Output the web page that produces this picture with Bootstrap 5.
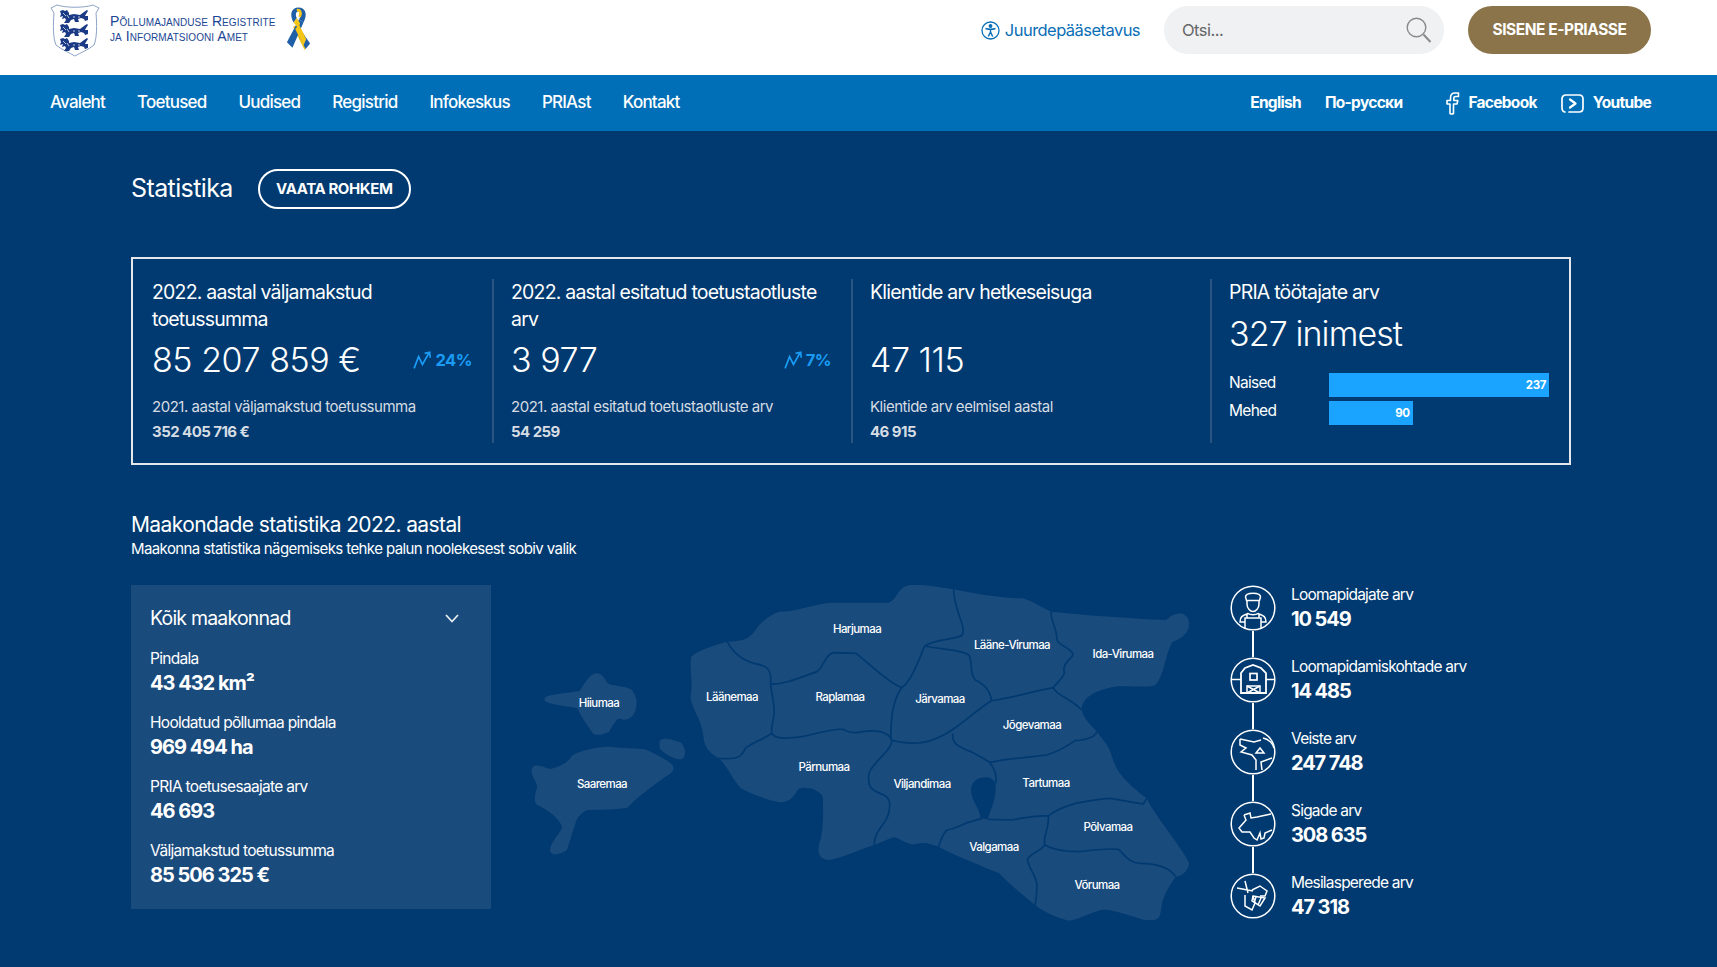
<!DOCTYPE html>
<html lang="et">
<head>
<meta charset="UTF-8">
<meta name="viewport" content="width=device-width, initial-scale=1.0">
<title>PRIA statistika</title>
<link href="https://cdn.jsdelivr.net/npm/bootstrap@5.3.0/dist/css/bootstrap.min.css" rel="stylesheet">
<style>
body {
    background: #003a70;
    color: #fff;
    font-family: Inter, "Noto Sans", sans-serif;
    min-height: 100vh;
}
.top-bar { height: 75px; background: #fff; padding: 0 66px 15px 50px; }
.logo-text {
    font-family: "Liberation Sans", sans-serif;
    font-variant: small-caps;
    font-size: 14px;
    line-height: 15px;
    color: #1c4693;
    letter-spacing: .06px;
    margin-left: 10px;
    margin-top: -3px;
}
.ribbon-ico { margin-left: 11px; margin-top: -4px; }
.access-link { color: #0b6fb6; font-size: 16.5px; letter-spacing: -.55px; text-decoration: none; gap: 5px; }
.search-box {
    width: 280px; height: 48px; border-radius: 24px; background: #f0f1f3;
    margin: 0 24px; padding: 0 12px 0 16px;
}
.search-box input {
    background: transparent; border: 0; outline: 0; width: 100%;
    font-size: 16.5px; letter-spacing: -.5px; color: #555;
}
.search-box input::placeholder { color: #666; }
.enter-btn {
    width: 183px; height: 48px; border-radius: 24px; background: #8b734a; color: #fff;
    font-weight: 700; font-size: 15.5px; letter-spacing: -.45px; border: 0; padding: 0;
}
.main-nav { height: 56px; background: #016fb7; padding: 0 66px 0 50px; }
.main-nav a { color: #fff; text-decoration: none; }
.nav-left { gap: 32px; font-size: 17px; font-weight: 500; letter-spacing: -.78px; }
.nav-right { font-size: 15.5px; font-weight: 700; letter-spacing: -.7px; }
.ru-link { margin-right: 43px; }
.yt-ico { margin-right: 9px; }
.content-wrap { padding: 38px 146px 0 131px; }
.page-title { font-size: 25px; font-weight: 400; letter-spacing: -.6px; margin: 0 25px 0 0; line-height: 38px; padding-bottom: 2px; }
.more-btn {
    height: 40px; width: 153px; border: 2px solid #fff; border-radius: 20px; background: transparent; color: #fff;
    font-weight: 700; font-size: 15px; letter-spacing: -.4px; padding: 0;
}
.stat-box { border: 2px solid #e4e7ea; padding: 20px 0; margin-top: 48px; height: 208px; }
.stat-col { padding: 0 20px 0 19px; height: 164px; }
.stat-col + .stat-col { border-left: 2px solid #2a5583; padding-left: 17px; }
.stat-title { font-size: 19.5px; line-height: 27px; letter-spacing: -.8px; height: 54px; }
.stat-title-one { height: 27px; }
.stat-num { font-size: 34px; line-height: 54px; letter-spacing: -.45px; font-weight: 300; }
.stat-num-tight { letter-spacing: -.9px; margin-top: 1px; }
.stat-trend { color: #1a9cf5; font-weight: 700; font-size: 16.5px; letter-spacing: -.5px; gap: 2px; }
.stat-sub { font-size: 15px; line-height: 22px; letter-spacing: -.48px; color: #d6dce3; margin-top: 9px; }
.stat-subval { font-size: 15px; line-height: 22px; letter-spacing: -.55px; color: #d6dce3; font-weight: 700; margin-top: 3px; }
.bar-list { margin-top: 12px; gap: 4px; }
.bar-label { width: 100px; font-size: 15.5px; line-height: 20px; letter-spacing: -.7px; font-weight: 400; padding-bottom: 4px; }
.bar-track { flex: 1; height: 24px; }
.bar-fill {
    height: 24px; background: #1aa3ff; color: #fff; font-weight: 700; font-size: 11.5px; letter-spacing: -.4px;
    line-height: 24px; text-align: right; padding-right: 3px;
}
.county-title { font-size: 21px; line-height: 30px; margin: 45px 0 0; font-weight: 400; letter-spacing: -.6px; }
.county-hint { font-size: 15px; line-height: 22px; letter-spacing: -.6px; margin: -2px 0 25px; }
.county-panel { width: 360px; height: 324px; background: #1a4b7d; padding: 18px 32px 0 19px; flex: none; }
.select-line { font-size: 19.5px; line-height: 30px; letter-spacing: -.8px; margin-bottom: 15px; }
.panel-item { margin-bottom: 16px; }
.panel-label { font-size: 15.5px; line-height: 22px; letter-spacing: -.7px; }
.panel-value { font-size: 20px; line-height: 27px; margin-bottom: -1px; font-weight: 700; letter-spacing: -1px; }
.map-holder { margin-left: 29px; flex: none; }
.map-name {
    fill: #fff; font-size: 11.5px; font-weight: 500; letter-spacing: -.58px;
    text-anchor: middle; dominant-baseline: middle; transform: translateY(1.5px);
}
.map-line { vector-effect: non-scaling-stroke; }
.count-list { margin-left: 30px; }
.count-row { height: 72px; gap: 15px; }
.count-ico { width: 46px; flex: none; }
.count-line { width: 2px; height: 26px; background: #fff; }
.count-label { font-size: 15.5px; line-height: 20px; letter-spacing: -.78px; }
.count-value { font-size: 20px; line-height: 28px; font-weight: 700; letter-spacing: -1.1px; }
</style>
</head>
<body>

<header class="top-bar d-flex align-items-center">
    <svg width="50" height="54" viewBox="0 0 50 54">
        <path d="M1 5 L7 2 C16 5 34 5 43 2 L49 5 L46 10 C47 22 47 35 44 42 C38 47 30 50 25 53 C20 50 12 47 6 42 C3 35 3 22 4 10 Z" fill="#fff" stroke="#8ea3c6" stroke-width="1"/>
        <defs>
            <g id="leo">
                <path fill="#1b3a86" d="M0 1 L3 0 L5 1 L7 0 L9 3 L9 5 L14 4 L20 5 L24 2 L27 0 L28 1 L26 4 L25 6 L28 6 L28 10 L25 11 L24 9 L21 8 L18 9 L19 12 L15 12 L14 9 L11 10 L9 13 L4 13 L6 10 L5 8 L2 9 L3 6 L0 7 L1 4 Z"/>
                <path fill="none" stroke="#fff" stroke-width=".7" d="M3 3 L6 6 M7 5 L9 8 M14 6 V8 M19 6 V8"/>
            </g>
        </defs>
        <use href="#leo" x="10" y="7"/>
        <use href="#leo" x="10" y="21"/>
        <use href="#leo" x="10" y="35"/>
    </svg>
    <div class="logo-text">Põllumajanduse Registrite<br>ja Informatsiooni Amet</div>
    <svg class="ribbon-ico" width="25" height="43" viewBox="2 1 21 39">
        <path d="M12.5 17 L22 34 L18 40 L7.5 19" fill="#f5c518"/>
        <path d="M8 15 C4 8 6 1.5 12.5 1.5 C19 1.5 21 8 17 15 L13 12 C15.5 8 15 5 12.5 5 C10 5 9.5 8 11 11 Z" fill="#1f5fa8"/>
        <path d="M17 15 L7 38 L2 33 L13 12 Z" fill="#1f5fa8"/>
        <path d="M8 15 L11 11 L14 16 L12 20 Z" fill="#f5c518"/>
        <path d="M11 4 C14 3.5 15.5 6 13.5 10" stroke="#f5c518" stroke-width="2.5" fill="none"/>
        <path d="M16 24 L23 34 L19 39 L12.5 27 Z" fill="#1f5fa8"/>
        <path d="M13 17 L19.5 30 L17 36 L9.5 21 Z" fill="#f5c518"/>
    </svg>

    <a class="access-link d-flex align-items-center ms-auto" href="#">
        <svg width="19" height="19" viewBox="0 0 19 19" fill="none" stroke="#0b6fb6" stroke-width="1.3">
            <circle cx="9.5" cy="9.5" r="8.5"/>
            <circle cx="9.5" cy="5" r="1.3" fill="#0b6fb6"/>
            <path d="M4.5 7.5 C7 8.3 12 8.3 14.5 7.5 M9.5 8 V11.5 M9.5 11 L7.3 15.5 M9.5 11 L11.7 15.5" stroke-width="1.5"/>
        </svg>
        Juurdepääsetavus
    </a>
    <div class="search-box d-flex align-items-center">
        <input type="text" placeholder="Otsi...">
        <svg class="flex-shrink-0" width="26" height="26" viewBox="0 0 26 26" fill="none" stroke="#8a8a8a">
            <circle cx="10.5" cy="10.5" r="9.3" stroke-width="1.4"/>
            <path d="M17.5 17.5 L24.5 25" stroke-width="2"/>
        </svg>
    </div>
    <button class="enter-btn">SISENE E-PRIASSE</button>
</header>

<nav class="main-nav d-flex align-items-center justify-content-between">
    <div class="nav-left d-flex">
        <a href="#">Avaleht</a>
        <a href="#">Toetused</a>
        <a href="#">Uudised</a>
        <a href="#">Registrid</a>
        <a href="#">Infokeskus</a>
        <a href="#">PRIAst</a>
        <a href="#">Kontakt</a>
    </div>
    <div class="nav-right d-flex align-items-center">
        <a href="#" class="me-4">English</a>
        <a href="#" class="ru-link">По-русски</a>
        <a href="#" class="d-flex align-items-center me-4">
            <svg class="me-2" width="15" height="23" viewBox="0 0 15 23" fill="none" stroke="#fff" stroke-width="1.6" stroke-linejoin="round">
                <path d="M13.5 1 H10 C7 1 5.5 3 5.5 6 V8.5 H2 V12 H5 V21.5 C6 22 7.5 22 8.5 21.5 V12 H12 L12.8 8.5 H8.8 V6.5 C8.8 5 9.5 4.5 10.5 4.5 H13.5 Z"/>
            </svg>
            Facebook
        </a>
        <a href="#" class="d-flex align-items-center">
            <svg class="yt-ico" width="23" height="19" viewBox="0 0 23 19" fill="none" stroke="#fff" stroke-width="1.7" stroke-linecap="round" stroke-linejoin="round">
                <path d="M5 1 H18 C20.5 1 22 2.5 22 5 V14 C22 16.5 20.5 18 18 18 H8 M4 18 C2.5 18 1 16.5 1 14 V5 C1 2.5 2.5 1 5 1"/>
                <path d="M9 5.5 L14.5 9.5 L9 13.5" stroke-width="2.2"/>
            </svg>
            Youtube
        </a>
    </div>
</nav>

<main class="content-wrap">
    <div class="d-flex align-items-center">
        <h1 class="page-title">Statistika</h1>
        <button class="more-btn">VAATA ROHKEM</button>
    </div>

    <section class="stat-box row g-0">
        <div class="col-3 stat-col">
            <div class="stat-title">2022. aastal väljamakstud toetussumma</div>
            <div class="d-flex justify-content-between align-items-center">
                <div class="stat-num">85 207 859 €</div>
                <div class="stat-trend d-flex align-items-center">
                    <svg width="20" height="18" viewBox="0 0 18 16" fill="none" stroke="#1a9cf5" stroke-width="1.5"><path d="M1 15.5 L5 5 L8.5 12 L14.5 1.5 M10.5 2 L15 1 L15.5 6"/></svg>
                    24%
                </div>
            </div>
            <div class="stat-sub">2021. aastal väljamakstud toetussumma</div>
            <div class="stat-subval">352 405 716 €</div>
        </div>
        <div class="col-3 stat-col">
            <div class="stat-title">2022. aastal esitatud toetustaotluste arv</div>
            <div class="d-flex justify-content-between align-items-center">
                <div class="stat-num">3 977</div>
                <div class="stat-trend d-flex align-items-center">
                    <svg width="20" height="18" viewBox="0 0 18 16" fill="none" stroke="#1a9cf5" stroke-width="1.5"><path d="M1 15.5 L5 5 L8.5 12 L14.5 1.5 M10.5 2 L15 1 L15.5 6"/></svg>
                    7%
                </div>
            </div>
            <div class="stat-sub">2021. aastal esitatud toetustaotluste arv</div>
            <div class="stat-subval">54 259</div>
        </div>
        <div class="col-3 stat-col">
            <div class="stat-title">Klientide arv hetkeseisuga</div>
            <div class="stat-num">47 115</div>
            <div class="stat-sub">Klientide arv eelmisel aastal</div>
            <div class="stat-subval">46 915</div>
        </div>
        <div class="col-3 stat-col">
            <div class="stat-title stat-title-one">PRIA töötajate arv</div>
            <div class="stat-num stat-num-tight">327 inimest</div>
            <div class="bar-list d-flex flex-column">
                <div class="d-flex align-items-center">
                    <div class="bar-label">Naised</div>
                    <div class="bar-track"><div class="bar-fill" style="width:100%">237</div></div>
                </div>
                <div class="d-flex align-items-center">
                    <div class="bar-label">Mehed</div>
                    <div class="bar-track"><div class="bar-fill" style="width:38%">90</div></div>
                </div>
            </div>
        </div>
    </section>

    <h2 class="county-title">Maakondade statistika 2022. aastal</h2>
    <p class="county-hint">Maakonna statistika nägemiseks tehke palun noolekesest sobiv valik</p>

    <div class="d-flex align-items-start">
        <div class="county-panel">
            <div class="select-line d-flex justify-content-between align-items-center">
                Kõik maakonnad
                <svg width="14" height="9" viewBox="0 0 14 9" fill="none" stroke="#e8ecf0" stroke-width="1.8"><path d="M1 1 L7 7.5 L13 1"/></svg>
            </div>
            <div class="panel-item"><div class="panel-label">Pindala</div><div class="panel-value">43 432 km²</div></div>
            <div class="panel-item"><div class="panel-label">Hooldatud põllumaa pindala</div><div class="panel-value">969 494 ha</div></div>
            <div class="panel-item"><div class="panel-label">PRIA toetusesaajate arv</div><div class="panel-value">46 693</div></div>
            <div class="panel-item"><div class="panel-label">Väljamakstud toetussumma</div><div class="panel-value">85 506 325 €</div></div>
        </div>

        <div class="map-holder">
            <svg width="680" height="355" viewBox="0 15 680 355">
                <svg x="0" y="0" width="680" height="370" viewBox="0 0 1568 1110" preserveAspectRatio="none">
                    <g fill="#1a4b7d">
                        <path d="M478 215 C510 213 525 210 540 185 C555 155 580 130 600 125 C640 125 680 100 720 98 L850 98 C870 90 870 50 900 45 C930 42 960 50 1000 58 C1050 70 1100 85 1160 85 C1185 95 1205 115 1225 125 C1300 135 1400 145 1490 150 C1505 130 1530 120 1540 145 C1550 180 1530 205 1505 215 C1490 240 1485 320 1465 345 C1450 355 1400 345 1370 350 C1330 360 1295 380 1295 420 C1300 450 1325 475 1330 485 C1345 510 1360 530 1365 560 C1375 600 1385 625 1445 685 C1460 730 1530 840 1543 880 C1540 905 1525 920 1512 920 C1495 950 1480 985 1478 1020 C1475 1055 1465 1050 1440 1050 C1400 1035 1360 1015 1340 1020 C1310 1030 1285 1050 1265 1052 C1230 1040 1200 1020 1188 1005 C1160 975 1130 945 1105 910 C1060 885 1000 855 965 830 C940 820 935 815 910 823 C890 825 880 805 860 802 L817 825 C790 835 750 860 715 870 C690 870 685 850 690 820 C700 790 700 720 698 680 C690 655 650 645 640 660 C630 680 625 695 600 697 C570 690 530 670 510 655 C490 630 480 590 458 565 C440 550 425 535 423 500 C420 450 395 415 393 380 C400 340 390 290 395 260 C410 240 450 225 478 215 Z"/>
                        <path d="M60 380 C80 370 120 368 138 362 C150 340 160 312 175 310 C195 310 195 335 205 342 C225 350 250 350 258 360 C270 385 272 395 265 425 C260 445 240 455 230 445 C220 450 215 465 205 485 C190 495 175 498 168 490 C155 465 140 440 133 415 C110 408 75 405 60 395 C55 390 55 385 60 380 Z"/>
                        <path d="M30 590 C40 580 60 595 70 597 C90 590 110 580 118 560 C125 545 180 530 205 530 C240 535 270 535 288 538 C310 550 340 570 352 585 C358 600 350 610 335 620 C310 645 270 680 250 710 C245 718 200 718 155 720 C140 730 130 745 128 760 C120 790 115 815 108 840 C95 852 75 860 70 845 C65 820 95 790 97 770 C90 745 65 720 40 705 C30 695 35 670 40 650 C35 625 20 610 30 590 Z"/>
                        <path d="M322 512 C335 500 350 510 372 518 C382 535 385 560 372 568 C355 570 330 550 322 535 Z"/>
                    </g>
                    <path fill="#003a70" d="M1062 745 C1060 715 1040 690 1040 660 C1040 630 1060 620 1080 622 C1095 630 1097 640 1097 650 C1097 690 1085 720 1078 748 Z"/>
                    <g fill="none" stroke="#003a70" stroke-width="1.7">
                        <path class="map-line" d="M478 215 C490 245 510 270 540 280 C570 288 580 295 578 340 C580 380 590 410 585 440 C580 470 580 480 580 490 C560 510 530 520 520 535 C510 560 505 570 458 565"/>
                        <path class="map-line" d="M578 342 C610 345 650 320 685 305 C700 290 705 250 725 248 L775 250 C800 275 850 340 880 353"/>
                        <path class="map-line" d="M880 353 C900 340 920 270 933 228"/>
                        <path class="map-line" d="M933 228 C960 205 1005 210 1020 195 C1030 170 1000 120 1000 58"/>
                        <path class="map-line" d="M933 228 C980 240 1020 240 1035 255 C1045 280 1035 310 1050 330 C1075 345 1085 370 1087 392"/>
                        <path class="map-line" d="M1225 125 C1222 150 1240 180 1238 210 C1245 230 1275 235 1275 255 C1265 275 1250 280 1255 310 C1250 330 1235 340 1230 353"/>
                        <path class="map-line" d="M1087 392 C1130 385 1180 365 1230 353"/>
                        <path class="map-line" d="M1230 353 C1235 375 1270 385 1295 420"/>
                        <path class="map-line" d="M880 353 C860 390 855 440 855 510"/>
                        <path class="map-line" d="M580 490 C590 510 620 505 650 500 C680 492 720 475 745 478 C760 490 775 490 790 485 C820 478 850 485 857 510"/>
                        <path class="map-line" d="M855 510 C880 520 920 525 950 510 C1000 490 1040 430 1087 392"/>
                        <path class="map-line" d="M998 490 C995 520 1010 530 1040 545 C1055 555 1070 565 1083 577"/>
                        <path class="map-line" d="M1083 577 C1130 565 1180 560 1215 555 C1240 545 1260 530 1280 512 C1300 510 1325 505 1330 485"/>
                        <path class="map-line" d="M1083 577 C1095 600 1100 615 1097 640"/>
                        <path class="map-line" d="M857 510 C860 540 810 580 805 610 C800 650 810 660 830 670 C855 680 855 700 850 730 C845 760 815 785 817 825"/>
                        <path class="map-line" d="M965 830 C970 810 975 790 985 780 C1010 775 1020 760 1040 755 L1065 745"/>
                        <path class="map-line" d="M1078 748 L1135 750 C1160 745 1180 735 1218 738"/>
                        <path class="map-line" d="M1218 738 C1240 715 1260 710 1280 700 C1310 695 1335 685 1360 685 C1390 690 1420 700 1437 702 L1445 685"/>
                        <path class="map-line" d="M1218 738 C1222 770 1205 800 1210 825"/>
                        <path class="map-line" d="M1210 825 C1200 845 1175 850 1170 870 C1175 900 1190 915 1192 945 C1192 970 1190 990 1188 1005"/>
                        <path class="map-line" d="M1210 825 C1230 840 1260 845 1290 845 C1320 840 1360 835 1380 838 C1395 855 1405 880 1430 880 C1470 880 1500 895 1512 920"/>
                    </g>
                </svg>
                <text class="map-name" x="337" y="58">Harjumaa</text>
                <text class="map-name" x="492" y="74">Lääne-Virumaa</text>
                <text class="map-name" x="603" y="83">Ida-Virumaa</text>
                <text class="map-name" x="79" y="132">Hiiumaa</text>
                <text class="map-name" x="212" y="126">Läänemaa</text>
                <text class="map-name" x="320" y="126">Raplamaa</text>
                <text class="map-name" x="420" y="128">Järvamaa</text>
                <text class="map-name" x="512" y="154">Jõgevamaa</text>
                <text class="map-name" x="82" y="213">Saaremaa</text>
                <text class="map-name" x="304" y="196">Pärnumaa</text>
                <text class="map-name" x="402" y="213">Viljandimaa</text>
                <text class="map-name" x="526" y="212">Tartumaa</text>
                <text class="map-name" x="588" y="256">Põlvamaa</text>
                <text class="map-name" x="474" y="276">Valgamaa</text>
                <text class="map-name" x="577" y="314">Võrumaa</text>
            </svg>
        </div>

        <div class="count-list">
            <div class="count-row d-flex">
                <div class="count-ico d-flex flex-column align-items-center">
                    <svg width="46" height="46" viewBox="0 0 46 46" fill="none" stroke="#fff" stroke-width="1.5">
                        <circle cx="23" cy="23" r="21.8"/>
                        <path d="M15.5 12 C15.5 7 30.5 7 30.5 12 L29.5 15.5 H16.5 Z"/>
                        <path d="M17 15.5 V19 C17 23 20 26.5 23 26.5 C26 26.5 29 23 29 19 V15.5"/>
                        <path d="M10 37 C10 32 12 30.5 18 28.5 C20 30 26 30 28 28.5 C34 30.5 36 32 36 37 H31 V33 H15 V37 Z M17 33 V29 M29 33 V29 M15 37 V43 M31 37 V43"/>
                    </svg>
                    <div class="count-line"></div>
                </div>
                <div>
                    <div class="count-label">Loomapidajate arv</div>
                    <div class="count-value">10 549</div>
                </div>
            </div>
            <div class="count-row d-flex">
                <div class="count-ico d-flex flex-column align-items-center">
                    <svg width="46" height="46" viewBox="0 0 46 46" fill="none" stroke="#fff" stroke-width="1.5">
                        <circle cx="23" cy="23" r="21.8"/>
                        <path d="M1.5 22.5 H11 M36 22.5 H44.5"/>
                        <path d="M11 36 V16 L15 11 L23 8 L31 11 L36 16 V36 Z" stroke-width="1.8"/>
                        <rect x="20" y="16.5" width="7" height="6.5" stroke-width="1.7"/>
                        <rect x="17" y="29" width="13" height="7"/>
                        <path d="M17 29 L30 36 M30 29 L17 36"/>
                    </svg>
                    <div class="count-line"></div>
                </div>
                <div>
                    <div class="count-label">Loomapidamiskohtade arv</div>
                    <div class="count-value">14 485</div>
                </div>
            </div>
            <div class="count-row d-flex">
                <div class="count-ico d-flex flex-column align-items-center">
                    <svg width="46" height="46" viewBox="0 0 46 46" fill="none" stroke="#fff" stroke-width="1.5">
                        <circle cx="23" cy="23" r="21.8"/>
                        <path d="M10 10 L24 13 L31 11 M10 10 L10 16 L16 19 L11 23 L22 26 L26 31 L26 41 M32 41 L31 33 L42 29 M33 9 C38 10 43 14 44 19"/>
                        <path d="M26 24 L30 19 L34 24 Z"/>
                    </svg>
                    <div class="count-line"></div>
                </div>
                <div>
                    <div class="count-label">Veiste arv</div>
                    <div class="count-value">247 748</div>
                </div>
            </div>
            <div class="count-row d-flex">
                <div class="count-ico d-flex flex-column align-items-center">
                    <svg width="46" height="46" viewBox="0 0 46 46" fill="none" stroke="#fff" stroke-width="1.5">
                        <circle cx="23" cy="23" r="21.8"/>
                        <path d="M14 14 L20 12 L21 17 L27 16 L41 13 M14 14 L16 19 L9 27 L12 31 L20 31 L24 37 L27 39 L30 32 L31 38 L34 37 L35 32 L42 29"/>
                    </svg>
                    <div class="count-line"></div>
                </div>
                <div>
                    <div class="count-label">Sigade arv</div>
                    <div class="count-value">308 635</div>
                </div>
            </div>
            <div class="count-row d-flex">
                <div class="count-ico d-flex flex-column align-items-center">
                    <svg width="46" height="46" viewBox="0 0 46 46" fill="none" stroke="#fff" stroke-width="1.5">
                        <circle cx="23" cy="23" r="21.8"/>
                        <path d="M7 15 L23 18 M15 8 L18 20"/>
                        <path d="M22 17 L30 13 L37 18 L35 23 L30 23"/>
                        <path d="M15 22 L15 33 L22 37 L25 30 L23 23"/>
                        <path d="M23 23 L35 25 L30 33 L22 28 Z M26 24 L24 30 M31 25 L28 32"/>
                    </svg>
                </div>
                <div>
                    <div class="count-label">Mesilasperede arv</div>
                    <div class="count-value">47 318</div>
                </div>
            </div>
        </div>
    </div>
</main>

<script src="https://cdn.jsdelivr.net/npm/bootstrap@5.3.0/dist/js/bootstrap.bundle.min.js"></script>
</body>
</html>
